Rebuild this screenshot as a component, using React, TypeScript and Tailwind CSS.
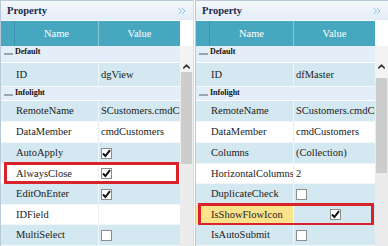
import { ChevronsRight, ChevronUp } from "lucide-react";

type Row = {
  cat?: string;
  name?: string;
  value?: string;
  check?: boolean;
  blue?: boolean;
  h: string;
  mark?: string;
  center?: boolean;
  sel?: boolean;
};

const leftRows: Row[] = [
  { cat: "Default", h: "h-[17px]" },
  { name: "ID", value: "dgView", blue: true, h: "h-[24px]" },
  { cat: "Infolight", h: "h-[14px]" },
  { name: "RemoteName", value: "SCustomers.cmdCustomers", blue: true, h: "h-[21px]" },
  { name: "DataMember", value: "cmdCustomers", h: "h-[21px]" },
  { name: "AutoApply", check: true, blue: true, h: "h-[21px]" },
  { name: "AlwaysClose", check: true, h: "h-[20px]", mark: "left-[3px] right-[1px] -top-[2px] -bottom-[1px]" },
  { name: "EditOnEnter", check: true, blue: true, h: "h-[21px]" },
  { name: "IDField", h: "h-[20px]" },
  { name: "MultiSelect", check: false, blue: true, h: "h-[21px]" },
];

const rightRows: Row[] = [
  { cat: "Default", h: "h-[17px]" },
  { name: "ID", value: "dfMaster", blue: true, h: "h-[24px]" },
  { cat: "Infolight", h: "h-[14px]" },
  { name: "RemoteName", value: "SCustomers.cmdCustomers", blue: true, h: "h-[21px]" },
  { name: "DataMember", value: "cmdCustomers", h: "h-[21px]" },
  { name: "Columns", value: "(Collection)", blue: true, h: "h-[21px]" },
  { name: "HorizontalColumnsCount", value: "2", h: "h-[20px]" },
  { name: "DuplicateCheck", check: false, blue: true, h: "h-[21px]" },
  { name: "IsShowFlowIcon", check: true, blue: true, center: true, sel: true, h: "h-[20px]", mark: "left-[2px] right-[1px] -top-[2px] -bottom-[2px]" },
  { name: "IsAutoSubmit", check: false, blue: true, h: "h-[21px]" },
];

function Check({ on }: { on: boolean }) {
  return (
    <span className="w-[11px] h-[11px] border border-[#8c8c8c] bg-white flex items-center justify-center">
      {on && (
        <svg width="9" height="9" viewBox="0 0 9 9">
          <path d="M1 4.5 L3.4 7 L8 1.2" fill="none" stroke="#111" strokeWidth="2" />
        </svg>
      )}
    </span>
  );
}

function Panel({ rows, thumbTop, thumbH }: { rows: Row[]; thumbTop: string; thumbH: string }) {
  return (
    <div className="w-[193px] h-[246px] flex flex-col border-l border-t border-[#b9c9d8] overflow-hidden bg-white">
      {/* title */}
      <div className="h-[22px] flex items-center justify-between pl-[6px] pr-[5px] bg-gradient-to-b from-[#f4f8fc] to-[#e3ecf5] border-b border-[#f8fbfe]">
        <span className="text-[10.5px] font-bold text-[#1b2a4e]">Property</span>
        <ChevronsRight size={12} strokeWidth={1.6} className="text-[#6cb2e2]" />
      </div>
      <div className="flex flex-1">
        <div className="flex-1 flex flex-col min-w-0">
          {/* column header */}
          <div className="h-[25px] grid grid-cols-[14px_84px_1fr] bg-[#47a7bf] text-white text-[10.5px]">
            <div className="border-r border-[#3d95ad]" />
            <div className="flex items-center justify-center border-r border-[#86c6d6]">Name</div>
            <div className="flex items-center justify-center">Value</div>
          </div>
          {rows.map((r, i) =>
            r.cat ? (
              <div key={i} className={`${r.h} flex items-start bg-[#e4eef8] border-b border-white`}>
                <span className="w-[14px] flex justify-center pt-[7px]">
                  <span className="w-[9px] h-[2px] bg-[#9aa4ae]" />
                </span>
                <span className="text-[8px] leading-[10px] font-bold text-[#111] pt-[1px]">{r.cat}</span>
              </div>
            ) : (
              <div key={i} className={`${r.h} relative grid grid-cols-[14px_84px_1fr] text-[10.5px] text-[#222] ${r.blue ? "bg-[#d3e8f0]" : "bg-white"} border-b border-[#f2f8fa]`}>
                <div />
                <div className={`flex items-center overflow-hidden whitespace-nowrap border-r ${r.blue ? "border-[#f0f7fa]" : "border-[#e8f0f4]"} ${r.sel ? "bg-[#fbe28b] -ml-[14px] pl-[15px]" : "pl-[1px]"}`}>
                  {r.name}
                </div>
                <div className={`flex items-center overflow-hidden whitespace-nowrap pl-[2px] ${r.center ? "justify-center" : ""}`}>
                  {r.check !== undefined ? <Check on={r.check} /> : r.value}
                </div>
                {r.mark && <span className={`absolute ${r.mark} border-[3px] border-[#d8232b]`} />}
              </div>
            )
          )}
        </div>
        {/* scrollbar */}
        <div className="w-[13px] flex flex-col bg-[#ececec]">
          <div className="h-[25px] bg-white" />
          <div className="h-[26px] bg-[#f4f4f4] flex items-center justify-center pt-[14px]">
            <ChevronUp size={11} strokeWidth={3.5} className="text-[#3a3a3a]" />
          </div>
          <div className={`${thumbTop} bg-[#f4f4f4]`} />
          <div className={`${thumbH} bg-[#cdcdcd] mx-[1px]`} />
        </div>
      </div>
    </div>
  );
}

export default function App() {
  return (
    <div className="w-[388px] h-[246px] flex bg-white font-['Liberation_Serif',serif] overflow-hidden">
      <Panel rows={leftRows} thumbTop="h-0" thumbH="h-[92px]" />
      <div className="w-[2px] border-l border-[#d6dee6] bg-white" />
      <Panel rows={rightRows} thumbTop="h-[6px]" thumbH="h-[95px]" />
    </div>
  );
}
